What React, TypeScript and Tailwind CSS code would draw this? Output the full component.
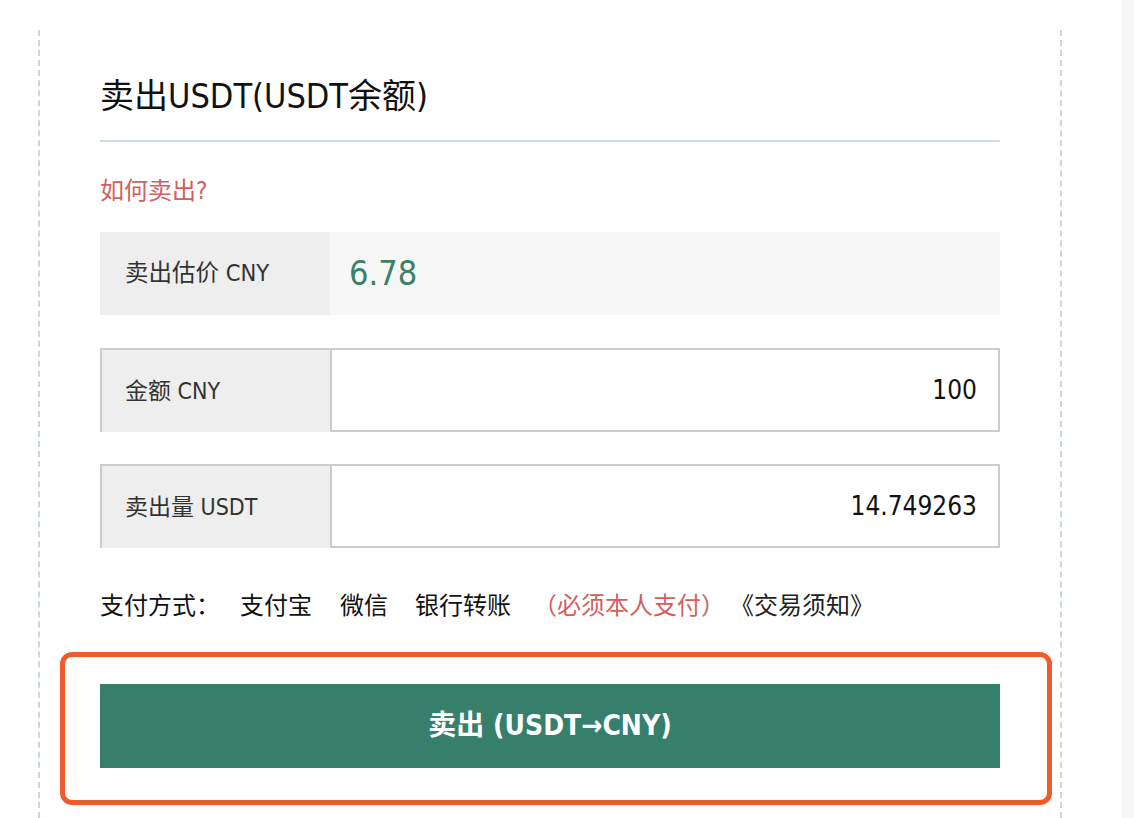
import React from "react";

const FONT = {
  fontFamily:
    '"DejaVu Sans Condensed", "DejaVu Sans", "Noto Sans CJK SC", sans-serif',
};

function InputRow({ label, value }: { label: string; value: string }) {
  return (
    <div className="flex h-[84px]">
      <div className="flex w-[230px] items-center border-l-2 border-t-2 border-[#cccccc] bg-[#eeeeee] pl-[23px] text-[23px] text-[#333333]">
        {label}
      </div>
      <div className="flex flex-1 items-center justify-end border-2 border-[#cccccc] bg-white pr-[21px] text-[26px] text-[#111111]">
        {value}
      </div>
    </div>
  );
}

export default function App() {
  return (
    <div
      className="flex h-[818px] w-[1134px] overflow-hidden bg-white"
      style={FONT}
    >
      <div className="flex-1 pt-[30px]">
        <div className="ml-[38px] h-full w-[1024px] border-x-2 border-dashed border-[#c9d7de] px-[60px] pt-[42px]">
          <div className="text-[34px] leading-[48px] text-[#111111]">
            卖出USDT(USDT余额)
          </div>
          <div className="mt-[20px] h-[2px] bg-[#cfdbe2]" />
          <div className="mt-[33px] text-[24px] leading-[32px] text-[#d2605d]">
            如何卖出?
          </div>

          <div className="mt-[25px] flex h-[83px]">
            <div className="flex w-[230px] items-center bg-[#eeeeee] pl-[25px] text-[23.5px] text-[#333333]">
              卖出估价 CNY
            </div>
            <div className="flex flex-1 items-center bg-[#f7f7f7] pl-[19px] text-[34px] text-[#3a806b]">
              6.78
            </div>
          </div>

          <div className="mt-[33px]">
            <InputRow label="金额 CNY" value="100" />
          </div>
          <div className="mt-[32px]">
            <InputRow label="卖出量 USDT" value="14.749263" />
          </div>

          <div className="mt-[42px] flex text-[24px] leading-[32px] text-[#111111]">
            <span>支付方式：</span>
            <span className="ml-[20px]">支付宝</span>
            <span className="ml-[28px]">微信</span>
            <span className="ml-[27px]">银行转账</span>
            <span className="ml-[22px] text-[#d2605d]">（必须本人支付）</span>
            <span className="ml-[5px] text-[#222222]">《交易须知》</span>
          </div>

          <div className="relative mt-[62px]">
            <button className="flex h-[84px] w-full items-center justify-center bg-[#367f6b] text-[28px] font-bold text-white">
              卖出 (USDT→CNY)
            </button>
            <div className="pointer-events-none absolute -bottom-[37px] -left-[40px] -right-[52px] -top-[32px] rounded-[12px] border-[5px] border-[#f15a2a]" />
          </div>
        </div>
      </div>
      <div className="w-[12px] bg-[#f7f7f7]" />
    </div>
  );
}
